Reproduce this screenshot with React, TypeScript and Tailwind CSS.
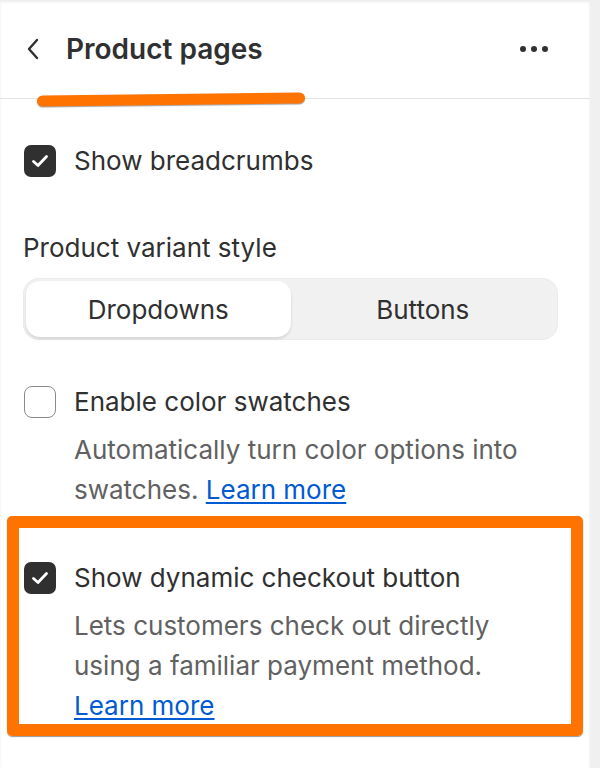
import React from "react";

type CheckProps = {
  checked: boolean;
};

function Checkbox({ checked }: CheckProps) {
  if (checked) {
    return (
      <div className="flex h-8 w-8 shrink-0 items-center justify-center rounded-[7px] bg-[#303030]">
        <svg width="20" height="20" viewBox="0 0 20 20" fill="none">
          <path
            d="M3.5 10.5 L8 14.5 L16.5 5.5"
            stroke="white"
            strokeWidth="2.8"
            strokeLinecap="round"
            strokeLinejoin="round"
          />
        </svg>
      </div>
    );
  }
  return (
    <div className="h-8 w-8 shrink-0 rounded-[8px] border-[1.5px] border-[#8a8a8a] bg-white" />
  );
}

type OptionProps = {
  checked: boolean;
  label: string;
  children?: React.ReactNode;
};

function Option({ checked, label, children }: OptionProps) {
  return (
    <div className="flex gap-[18px]">
      <div className="flex h-10 items-center">
        <Checkbox checked={checked} />
      </div>
      <div className="flex flex-col gap-2">
        <span className="text-[26px] leading-10 text-[#303030]">{label}</span>
        {children && (
          <p className="text-[26px] leading-10 text-[#616161]">{children}</p>
        )}
      </div>
    </div>
  );
}

function LearnMore() {
  return (
    <a
      href="#"
      className="whitespace-nowrap text-[#005bd3] underline underline-offset-[3px]"
    >
      Learn more
    </a>
  );
}

export default function App() {
  return (
    <div
      className="flex h-[768px] w-[600px] overflow-hidden bg-white"
      style={{ fontFamily: "Inter, 'Noto Sans', sans-serif" }}
    >
      <div className="relative flex w-[590px] flex-col shadow-[inset_0_2px_3px_rgba(0,0,0,0.08)]">
        {/* header */}
        <div className="relative flex h-[99px] items-center border-b border-[#e3e3e3] pl-[25px] pr-[42px]">
          <svg width="16" height="24" viewBox="0 0 16 24" fill="none">
            <path
              d="M12 3 L4 12 L12 21"
              stroke="#303030"
              strokeWidth="2.4"
              strokeLinecap="round"
              strokeLinejoin="round"
            />
          </svg>
          <h1 className="ml-[25px] text-[28px] font-semibold text-[#303030]">
            Product pages
          </h1>
          <div className="ml-auto flex items-center gap-[5px]">
            <span className="h-[6px] w-[6px] rounded-full bg-[#303030]" />
            <span className="h-[6px] w-[6px] rounded-full bg-[#303030]" />
            <span className="h-[6px] w-[6px] rounded-full bg-[#303030]" />
          </div>

          {/* orange scribble under the title */}
          <div className="absolute left-[37px] top-[94px] h-[11px] w-[268px] -rotate-[0.7deg] rounded-full bg-[#ff7300] shadow-[0_1px_1px_rgba(0,0,0,0.35)]" />
        </div>

        {/* settings */}
        <div className="flex flex-col pl-[23px] pr-8 pt-[42px]">
          <div className="ml-px">
            <Option checked label="Show breadcrumbs" />
          </div>

          <div className="mt-[47px] text-[26px] leading-10 text-[#303030]">
            Product variant style
          </div>
          <div className="mt-[10px] flex h-[62px] rounded-[16px] bg-[#f1f1f1] p-[3px] shadow-[inset_0_0_0_1px_#ececec]">
            <div className="flex flex-1 items-center justify-center rounded-[14px] bg-white text-[26px] text-[#303030] shadow-[0_2px_3px_rgba(0,0,0,0.12)]">
              Dropdowns
            </div>
            <div className="flex flex-1 items-center justify-center text-[26px] text-[#303030]">
              Buttons
            </div>
          </div>

          <div className="ml-px mt-[42px]">
            <Option checked={false} label="Enable color swatches">
              Automatically turn color options into swatches. <LearnMore />
            </Option>
          </div>
        </div>

        {/* highlighted option */}
        <div className="mx-[7px] mt-[6px] h-[220px] w-[576px] overflow-hidden rounded-[5px] border-[12px] border-[#ff7300] pl-[5px] pr-[13px] pt-[30px] shadow-[0_1px_1px_rgba(0,0,0,0.4)]">
          <Option checked label="Show dynamic checkout button">
            Lets customers check out directly using a familiar payment method.{" "}
            <LearnMore />
          </Option>
        </div>
      </div>
      <div className="h-full w-[10px] bg-[#f0f0f0]" />
    </div>
  );
}
